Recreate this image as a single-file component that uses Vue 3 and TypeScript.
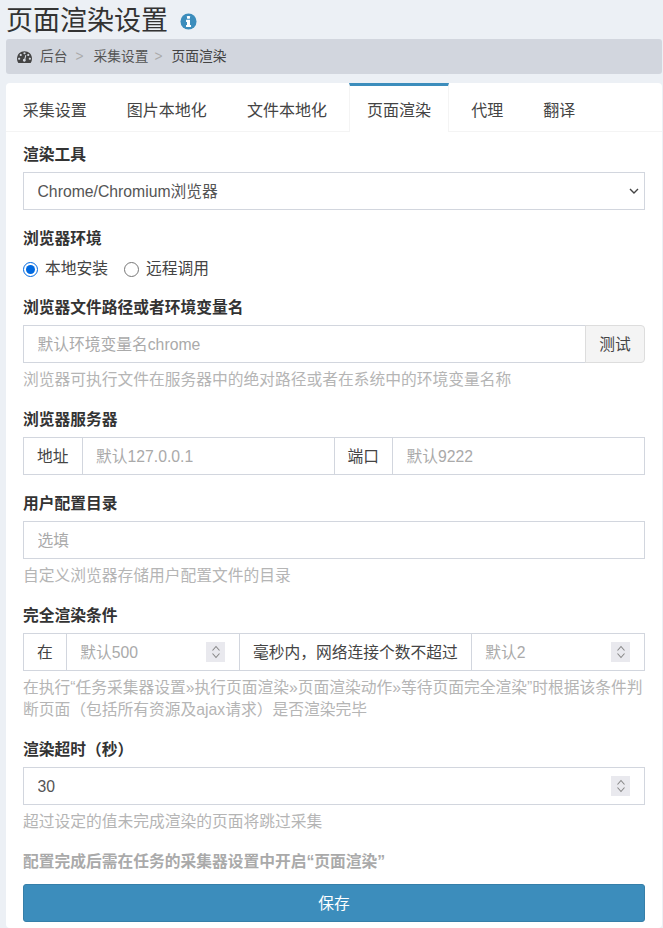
<script setup lang="ts">
const tabs: string[] = ['采集设置', '图片本地化', '文件本地化', '页面渲染', '代理', '翻译']
const activeTab = '页面渲染'
</script>

<template>
  <div class="page">
    <h1 class="title">
      <span>页面渲染设置</span>
      <svg class="info" viewBox="0 0 18 18" aria-hidden="true">
        <circle cx="9" cy="9" r="8.5" fill="#3c8dbc" />
        <rect x="7.4" y="3.2" width="3.2" height="2.8" rx="0.5" fill="#fff" />
        <path d="M6.4 7.2h4.2v5.4h1.1v2.2H6.4v-2.2h1v-3.2h-1z" fill="#fff" />
      </svg>
    </h1>

    <nav class="crumbs">
      <svg class="gauge" viewBox="0 0 1792 1792" aria-hidden="true">
        <path fill-rule="evenodd" d="M384 1152q0-53-37.500-90.500T256 1024t-90.500 37.500T128 1152t37.500 90.500T256 1280t90.500-37.500T384 1152zm192-448q0-53-37.500-90.500T448 576t-90.500 37.500T320 704t37.500 90.500T448 832t90.500-37.500T576 704zm428 481l101-382q6-26-7.500-48.500T1059 725t-48 6.500-30 39.500l-101 382q-60 5-107 43.500T710 1295q-17 69 19 130.500t105 79.500 130.500-19 79.500-105q13-48-1-94.500t-54-99zm660-33q0-53-37.500-90.500T1536 1024t-90.500 37.500T1408 1152t37.500 90.500 90.500 37.500 90.500-37.500T1664 1152zM1024 512q0-53-37.500-90.500T896 384t-90.500 37.500T768 512t37.500 90.500T896 640t90.500-37.500T1024 512zm448 192q0-53-37.500-90.500T1344 576t-90.500 37.500T1216 704t37.500 90.500 90.500 37.500 90.500-37.500T1472 704zm320 448q0 261-141 483-19 29-54 29H195q-35 0-54-29Q0 1414 0 1152q0-182 71-348t191-286T548 327 896 256t348 71 286 191 191 286 71 348z" fill="#444" />
      </svg>
      <span class="crumb">后台</span>
      <span class="sep sep-a">&gt;</span>
      <span class="crumb">采集设置</span>
      <span class="sep sep-b">&gt;</span>
      <span class="crumb current">页面渲染</span>
    </nav>

    <section class="box">
      <ul class="tabs">
        <li v-for="tab in tabs" :key="tab" class="tab" :class="{ active: tab === activeTab }">{{ tab }}</li>
      </ul>

      <form class="form" @submit.prevent>
        <div class="group">
          <label class="label">渲染工具</label>
          <div class="field">
            <select class="control select">
              <option>Chrome/Chromium浏览器</option>
            </select>
            <svg class="caret" viewBox="0 0 10 6" aria-hidden="true">
              <path d="M1 1l4 4 4-4" fill="none" stroke="#444" stroke-width="1.4" />
            </svg>
          </div>
        </div>

        <div class="group radio-group">
          <label class="label">浏览器环境</label>
          <div class="radios">
            <label class="radio"><input type="radio" name="env" checked />本地安装</label>
            <label class="radio"><input type="radio" name="env" />远程调用</label>
          </div>
        </div>

        <div class="group">
          <label class="label">浏览器文件路径或者环境变量名</label>
          <div class="input-group">
            <input class="control joined" type="text" placeholder="默认环境变量名chrome" />
            <button class="test" type="button">测试</button>
          </div>
          <p class="help">浏览器可执行文件在服务器中的绝对路径或者在系统中的环境变量名称</p>
        </div>

        <div class="group">
          <label class="label">浏览器服务器</label>
          <div class="input-group">
            <span class="addon">地址</span>
            <input class="control joined" type="text" placeholder="默认127.0.0.1" />
            <span class="addon">端口</span>
            <input class="control joined" type="text" placeholder="默认9222" />
          </div>
        </div>

        <div class="group">
          <label class="label">用户配置目录</label>
          <input class="control" type="text" placeholder="选填" />
          <p class="help">自定义浏览器存储用户配置文件的目录</p>
        </div>

        <div class="group">
          <label class="label">完全渲染条件</label>
          <div class="input-group">
            <span class="addon">在</span>
            <div class="field joined">
              <input class="control" type="number" placeholder="默认500" />
              <span class="spin">
                <svg viewBox="0 0 10 16" aria-hidden="true">
                  <path d="M1.500 6.500L5 2.500l3.500 4M1.500 9.500L5 13.500l3.500-4" fill="none" stroke="#888" stroke-width="1.100" />
                </svg>
              </span>
            </div>
            <span class="addon">毫秒内，网络连接个数不超过</span>
            <div class="field joined">
              <input class="control" type="number" placeholder="默认2" />
              <span class="spin">
                <svg viewBox="0 0 10 16" aria-hidden="true">
                  <path d="M1.500 6.500L5 2.500l3.500 4M1.500 9.500L5 13.500l3.500-4" fill="none" stroke="#888" stroke-width="1.100" />
                </svg>
              </span>
            </div>
          </div>
          <p class="help">在执行“任务采集器设置»执行页面渲染»页面渲染动作»等待页面完全渲染”时根据该条件判断页面（包括所有资源及ajax请求）是否渲染完毕</p>
        </div>

        <div class="group">
          <label class="label">渲染超时（秒）</label>
          <div class="field">
            <input class="control" type="number" value="30" />
            <span class="spin">
              <svg viewBox="0 0 10 16" aria-hidden="true">
                <path d="M1.500 6.500L5 2.500l3.500 4M1.500 9.500L5 13.500l3.500-4" fill="none" stroke="#888" stroke-width="1.100" />
              </svg>
            </span>
          </div>
          <p class="help">超过设定的值未完成渲染的页面将跳过采集</p>
        </div>

        <p class="notice">配置完成后需在任务的采集器设置中开启“页面渲染”</p>
        <button class="save" type="submit">保存</button>
      </form>
    </section>
  </div>
</template>

<style>
html, body {
  margin: 0;
  background: #ecf0f5;
  overflow: hidden;
}
</style>

<style scoped>
.page {
  box-sizing: border-box;
  width: 663px;
  height: 928px;
  padding: 0 1px 0 6px;
  overflow: hidden;
  font-family: "Liberation Sans", "Noto Sans CJK SC", sans-serif;
  font-size: 15.750px;
  line-height: 22.500px;
  color: #444;
}
.title {
  display: flex;
  align-items: center;
  box-sizing: border-box;
  height: 39px;
  margin: 0;
  padding-top: 3px;
  font-size: 27px;
  font-weight: 400;
  color: #333;
}
.info {
  width: 17px;
  height: 17px;
  margin-left: 12px;
}
.crumbs {
  display: flex;
  align-items: center;
  height: 35px;
  padding-left: 11px;
  border-radius: 3px;
  background: #d2d6de;
  font-size: 13.750px;
  color: #555;
}
.crumbs span {
  padding-top: 2px;
}
.gauge {
  width: 15px;
  height: 15px;
  margin-right: 8px;
}
.sep {
  color: #aaa;
}
.sep-a {
  margin: 0 10px 0 8px;
}
.sep-b {
  margin: 0 9px 0 6px;
}
.current {
  color: #444;
}
.box {
  margin-top: 9px;
  height: 845px;
  border-radius: 4px;
  background: #fff;
}
.tabs {
  display: flex;
  height: 48px;
  margin: 0;
  padding: 0;
  list-style: none;
  border-bottom: 1px solid #f4f4f4;
  font-size: 16px;
}
.tab {
  box-sizing: border-box;
  height: 49px;
  padding: 3px 16.750px 0;
  margin-right: 4.600px;
  border-left: 1.125px solid transparent;
  border-right: 1.125px solid transparent;
  line-height: 49px;
  white-space: nowrap;
}
.tab:first-child {
  margin-left: -1px;
}
.tab.active {
  padding-top: 0;
  border-top: 3px solid #3c8dbc;
  border-left-color: #f4f4f4;
  border-right-color: #f4f4f4;
  background: #fff;
}
.form {
  padding: 11.875px 17px 0;
}
.group {
  margin-bottom: 17.500px;
}
.radio-group {
  margin-bottom: 16.400px;
}
.label {
  display: block;
  margin-bottom: 5.625px;
  font-weight: 700;
  color: #333;
}
.field {
  position: relative;
}
.control {
  display: block;
  box-sizing: border-box;
  width: 100%;
  height: 38.250px;
  padding: 2px 13.500px 0;
  border: 1px solid #d2d6de;
  border-radius: 0;
  background: #fff;
  font: inherit;
  color: #555;
  outline: none;
}
.control::placeholder {
  color: #aaa;
  opacity: 1;
}
.control::-webkit-inner-spin-button,
.control::-webkit-outer-spin-button {
  -webkit-appearance: none;
  margin: 0;
}
.select {
  appearance: none;
}
.caret {
  position: absolute;
  top: 16px;
  right: 6px;
  width: 10px;
  height: 6px;
  pointer-events: none;
}
.spin {
  position: absolute;
  top: 9px;
  right: 15px;
  display: flex;
  align-items: center;
  justify-content: center;
  width: 19px;
  height: 20px;
  background: #e9e9ee;
}
.spin svg {
  width: 10px;
  height: 16px;
}
.radios {
  display: flex;
  gap: 16px;
  margin-top: 7.500px;
}
.radio {
  display: flex;
  align-items: center;
  color: #444;
}
.radio input {
  width: 15px;
  height: 15px;
  margin: 0 7px 0 0;
  accent-color: #0069e0;
}
.input-group {
  display: flex;
}
.joined {
  flex: 1 1 0;
  min-width: 0;
}
.joined + .addon,
.addon + .joined {
  margin-left: -1px;
}
.addon {
  flex: none;
  box-sizing: border-box;
  height: 38.250px;
  padding: 0 13px;
  border: 1px solid #d2d6de;
  line-height: 38px;
  color: #444;
  white-space: nowrap;
}
.test {
  flex: none;
  width: 60px;
  height: 38.250px;
  margin-left: -1px;
  border: 1px solid #ddd;
  border-radius: 0 4px 4px 0;
  background: #f4f4f4;
  font: inherit;
  color: #444;
  padding: 2px 0 0;
}
.help {
  margin: 5.625px 0 0;
  color: #b5b5b5;
}
.notice {
  margin: 0 0 10.625px;
  font-weight: 700;
  color: #aaa;
}
.save {
  display: block;
  width: 100%;
  height: 38.250px;
  padding: 2px 0 0;
  border: 1px solid #367fa9;
  border-radius: 3px;
  background: #3c8dbc;
  font: inherit;
  color: #fff;
}
</style>
